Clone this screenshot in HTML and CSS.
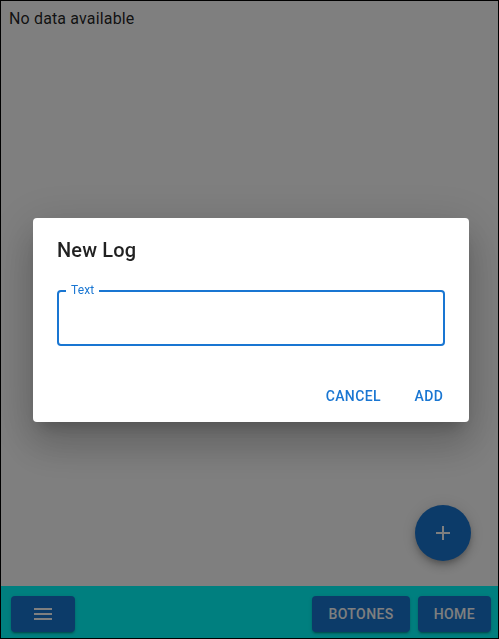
FILE: index.html
```html
<!DOCTYPE html>
<html lang="en">
<head>
<meta charset="utf-8">
<title>Logs</title>
<link rel="stylesheet" href="styles.css">
</head>
<body>
<div class="app">
  <main class="main">
    <p class="empty">No data available</p>
    <button class="fab" aria-label="add">
      <svg viewBox="0 0 24 24" width="24" height="24"><path d="M19 13h-6v6h-2v-6H5v-2h6V5h2v6h6v2z" fill="#fff"/></svg>
    </button>
  </main>
  <nav class="bar">
    <button class="btn btn-menu" aria-label="menu">
      <svg viewBox="0 0 24 24" width="24" height="24"><path d="M3 18h18v-2H3v2zm0-5h18v-2H3v2zm0-7v2h18V6H3z" fill="#fff"/></svg>
    </button>
    <div class="bar-right">
      <button class="btn">Botones</button>
      <button class="btn">Home</button>
    </div>
  </nav>
</div>
<div class="overlay">
  <div class="dialog">
    <h2 class="dialog-title">New Log</h2>
    <div class="dialog-content">
      <div class="field">
        <span class="field-label">Text</span>
      </div>
    </div>
    <div class="dialog-actions">
      <button class="text-btn">Cancel</button>
      <button class="text-btn">Add</button>
    </div>
  </div>
</div>
</body>
</html>
```

FILE: styles.css
```css
* { box-sizing: border-box; }
html, body { margin: 0; padding: 0; }
body {
  font-family: Roboto, "Liberation Sans", sans-serif;
  background: #fff;
}
.app {
  width: 499px;
  height: 639px;
  border: 1px solid #000;
  display: flex;
  flex-direction: column;
}
.main {
  flex: 1;
  position: relative;
  padding: 6px 8px;
}
.empty {
  margin: 0;
  font-size: 16px;
  line-height: 24px;
  letter-spacing: 0.00938em;
  color: rgba(0,0,0,0.87);
}
.fab {
  position: absolute;
  right: 27px;
  bottom: 25px;
  width: 56px;
  height: 56px;
  border-radius: 50%;
  border: 0;
  padding: 0;
  background: #1976d2;
  display: flex;
  align-items: center;
  justify-content: center;
  box-shadow: 0px 3px 5px -1px rgba(0,0,0,0.2), 0px 6px 10px 0px rgba(0,0,0,0.14), 0px 1px 18px 0px rgba(0,0,0,0.12);
}
.fab svg { display: block; }
.bar {
  height: 52px;
  flex: none;
  background: #00ffff;
  display: flex;
  align-items: flex-start;
  justify-content: space-between;
  padding: 10px 7px 0 10px;
}
.bar-right { display: flex; gap: 8px; }
.btn {
  height: 36px;
  min-width: 64px;
  padding: 6px 16px;
  border: 0;
  border-radius: 4px;
  background: #1976d2;
  color: #fff;
  font-family: Roboto, "Liberation Sans", sans-serif;
  font-size: 14px;
  font-weight: 500;
  letter-spacing: 0.02857em;
  text-transform: uppercase;
  line-height: 24px;
  display: flex;
  align-items: center;
  justify-content: center;
  box-shadow: 0px 3px 1px -2px rgba(0,0,0,0.2), 0px 2px 2px 0px rgba(0,0,0,0.14), 0px 1px 5px 0px rgba(0,0,0,0.12);
}
.btn svg { display: block; }
.overlay {
  position: fixed;
  inset: 0;
  background: rgba(0,0,0,0.5);
  display: flex;
  align-items: flex-start;
  justify-content: flex-start;
  padding: 218px 0 0 33px;
}
.dialog {
  width: 436px;
  height: 204px;
  background: #fff;
  border-radius: 4px;
  box-shadow: 0px 11px 15px -7px rgba(0,0,0,0.2), 0px 24px 38px 3px rgba(0,0,0,0.14), 0px 9px 46px 8px rgba(0,0,0,0.12);
  display: flex;
  flex-direction: column;
}
.dialog-title {
  margin: 0;
  padding: 16px 24px;
  font-size: 20px;
  font-weight: 500;
  line-height: 32px;
  letter-spacing: 0.0075em;
  color: rgba(0,0,0,0.87);
}
.dialog-content {
  padding: 8px 24px 24px;
}
.field {
  position: relative;
  height: 56px;
  border: 2px solid #1976d2;
  border-radius: 4px;
}
.field-label {
  position: absolute;
  top: -9px;
  left: 7px;
  padding: 0 5px;
  background: #fff;
  font-size: 12px;
  line-height: 14px;
  color: #1976d2;
  letter-spacing: 0.00938em;
}
.dialog-actions {
  display: flex;
  justify-content: flex-end;
  gap: 8px;
  padding: 8px;
}
.text-btn {
  height: 36px;
  min-width: 64px;
  padding: 6px 8px;
  border: 0;
  background: transparent;
  color: #1976d2;
  font-family: Roboto, "Liberation Sans", sans-serif;
  font-size: 14px;
  font-weight: 500;
  letter-spacing: 0.02857em;
  text-transform: uppercase;
  line-height: 24px;
  border-radius: 4px;
}
```
